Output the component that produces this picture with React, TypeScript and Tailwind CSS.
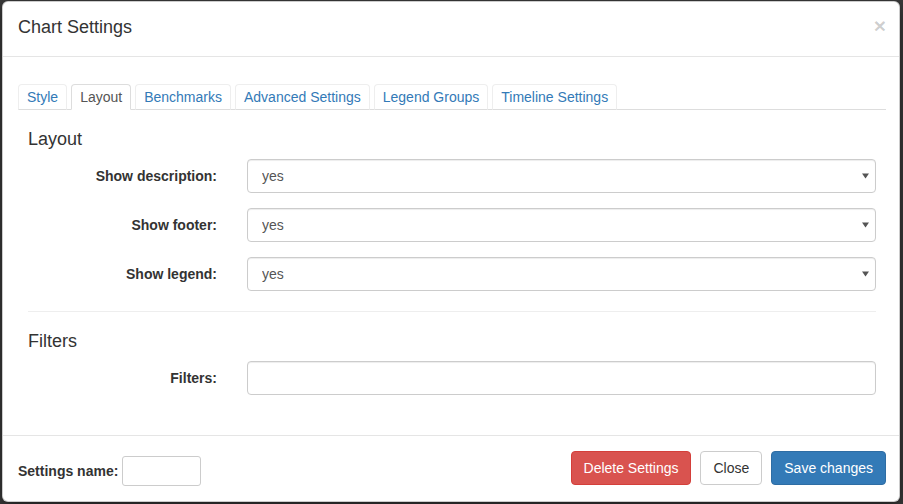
const tabs = [
  "Style",
  "Layout",
  "Benchmarks",
  "Advanced Settings",
  "Legend Groups",
  "Timeline Settings",
];

const layoutRows = ["Show description:", "Show footer:", "Show legend:"];

const SelectField = ({ label }: { label: string }) => (
  <div className="flex items-center gap-[30px]">
    <label className="w-[189px] text-right font-bold text-[#333]">{label}</label>
    <div className="relative flex-1">
      <select
        defaultValue="yes"
        className="h-[34px] w-full appearance-none rounded border border-[#ccc] bg-white pl-[14px] text-sm text-[#555] shadow-[inset_0_1px_1px_rgba(0,0,0,0.075)] outline-none"
      >
        <option value="yes">yes</option>
        <option value="no">no</option>
      </select>
      {/* native-looking dropdown arrow */}
      <svg
        className="pointer-events-none absolute right-[7px] top-[14px]"
        width="7"
        height="6"
        viewBox="0 0 7 6"
      >
        <path d="M0 0.5h7L3.5 5.5z" fill="#555" />
      </svg>
    </div>
  </div>
);

const App = () => {
  return (
    <div className="min-h-[504px] w-full bg-[#3a3a3a] pl-[2px] pt-px font-['Liberation_Sans',Arial,sans-serif] text-sm text-[#333]">
      <div className="w-[898px] rounded-md border border-black/20 bg-white shadow-[0_5px_15px_rgba(0,0,0,0.5)]">
        {/* Header */}
        <div className="flex items-start justify-between border-b border-[#e5e5e5] pb-[16px] pl-[15px] pr-[13px] pt-[13px]">
          <h4 className="text-[18px] leading-[25px] text-[#333]">Chart Settings</h4>
          <button
            type="button"
            className="text-[21px] font-bold leading-[21px] text-black/20 [text-shadow:0_1px_0_#fff]"
          >
            ×
          </button>
        </div>

        {/* Body */}
        <div className="pb-[15px] pl-[15px] pr-[13px] pt-[27px]">
          <ul className="flex gap-[4px] border-b border-[#ddd]">
            {tabs.map((tab) => (
              <li key={tab} className="-mb-px">
                <a
                  className={`block rounded-t border px-[8px] py-[2px] leading-5 ${
                    tab === "Layout"
                      ? "border-[#ddd] border-b-white bg-white text-[#555]"
                      : "border-[#eee] border-b-[#ddd] text-[#337ab7]"
                  }`}
                >
                  {tab}
                </a>
              </li>
            ))}
          </ul>

          <div className="px-[10px] pb-[25px] pt-[19px]">
            <h4 className="mb-[10px] text-[18px] leading-5">Layout</h4>
            <div className="flex flex-col gap-[15px]">
              {layoutRows.map((row) => (
                <SelectField key={row} label={row} />
              ))}
            </div>

            <hr className="mb-[19px] mt-5 border-[#eee]" />

            <h4 className="mb-[10px] text-[18px] leading-5">Filters</h4>
            <div className="flex items-center gap-[30px]">
              <label className="w-[189px] text-right font-bold">Filters:</label>
              <input
                type="text"
                className="h-[34px] flex-1 rounded border border-[#ccc] px-3 text-[#555] shadow-[inset_0_1px_1px_rgba(0,0,0,0.075)] outline-none"
              />
            </div>
          </div>
        </div>

        {/* Footer */}
        <div className="flex items-start justify-between border-t border-[#e5e5e5] py-[15px] pl-[15px] pr-[13px]">
          <div className="flex items-center gap-1 pt-[5px]">
            <label className="font-bold">Settings name:</label>
            <input
              type="text"
              className="h-[30px] w-[79px] rounded-[3px] border border-[#ccc] px-2 outline-none"
            />
          </div>
          <div className="flex gap-[9px]">
            <button
              type="button"
              className="h-[34px] rounded border border-[#d43f3a] bg-[#d9534f] px-3 leading-5 text-white"
            >
              Delete Settings
            </button>
            <button
              type="button"
              className="h-[34px] rounded border border-[#ccc] bg-white px-3 leading-5 text-[#333]"
            >
              Close
            </button>
            <button
              type="button"
              className="h-[34px] rounded border border-[#2e6da4] bg-[#337ab7] px-3 leading-5 text-white"
            >
              Save changes
            </button>
          </div>
        </div>
      </div>
    </div>
  );
};

export default App;
